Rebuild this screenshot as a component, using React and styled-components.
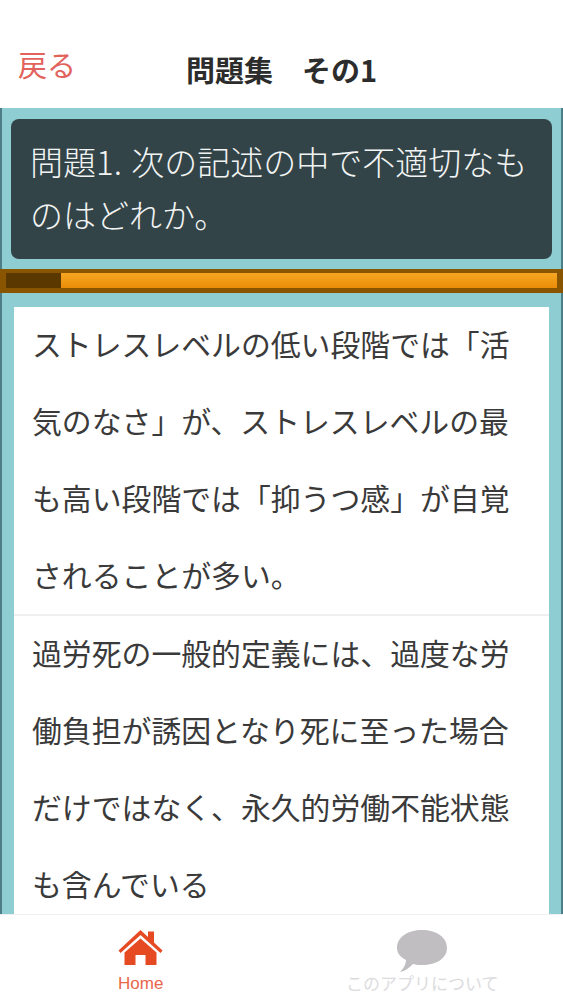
import React from "react";
import styled, { createGlobalStyle } from "styled-components";

const GlobalStyle = createGlobalStyle`
  html, body {
    margin: 0;
    padding: 0;
    background: #fff;
    font-family: "Noto Sans CJK JP", "Liberation Sans", sans-serif;
  }
`;

const Page = styled.div`
  width: 563px;
  height: 1000px;
  display: flex;
  flex-direction: column;
  overflow: hidden;
`;

const Header = styled.header`
  flex: 0 0 108px;
  box-sizing: border-box;
  display: grid;
  grid-template-columns: 1fr auto 1fr;
  align-items: end;
  padding-bottom: 19px;
  background: #fff;
`;

const BackLink = styled.a`
  padding-left: 18px;
  font-size: 29px;
  line-height: 40px;
  margin-bottom: 5px;
  color: #e2625c;
`;

const Title = styled.h1`
  margin: 0;
  font-size: 29px;
  line-height: 40px;
  font-weight: 700;
  color: #2c2c2c;
`;

const Main = styled.main`
  flex: 1;
  min-height: 0;
  overflow: hidden;
  background: #8ecdd2;
`;

const QuestionArea = styled.section`
  box-sizing: border-box;
  height: 161px;
  padding: 11px 9px 10px;
  border: solid #4d7d86;
  border-width: 0 2px;
`;

const QuestionCard = styled.div`
  box-sizing: border-box;
  height: 140px;
  padding: 16px 18px 16px 19px;
  border-radius: 8px;
  background: #334448;
  color: #f2f4f4;
  font-size: 33px;
  font-weight: 300;
  line-height: 53px;
  word-spacing: 2px;
`;

const ProgressTrack = styled.div`
  box-sizing: border-box;
  height: 24px;
  padding: 4px 6px 5px;
  background: #8a5500;
`;

const ProgressBar = styled.div`
  display: flex;
  height: 100%;
  background: linear-gradient(#f6a623, #ea8d08);
`;

const ProgressDone = styled.div`
  background: #5a3800;
`;

const ChoiceList = styled.section`
  box-sizing: border-box;
  padding: 14px 12px 0;
  border: solid #4d7d86;
  border-width: 0 2px;
`;

const Choice = styled.div`
  box-sizing: border-box;
  display: flow-root;
  height: 309px;
  padding: 0 19px 0 18px;
  background: #fff;
  border-bottom: 2px solid #efeff1;
`;

const ChoiceText = styled.p`
  margin: -2px 0 0;
  color: #3a3a3a;
  font-size: 29.85px;
  line-height: 77px;
`;

const TabBar = styled.nav`
  flex: 0 0 86px;
  box-sizing: border-box;
  display: grid;
  grid-template-columns: 1fr 1fr;
  background: #fff;
  border-top: 1px solid #f0f0f2;
`;

const Tab = styled.a`
  display: flex;
  flex-direction: column;
  align-items: center;
  padding-top: 15px;
  color: ${(p) => (p.$active ? "#e9654a" : "#dcdcde")};
`;

const IconSlot = styled.div`
  height: ${(p) => (p.$active ? "42px" : "41px")};
  display: flex;
  align-items: flex-start;
  color: ${(p) => (p.$active ? "#e64a22" : "#c0bec1")};
`;

const TabLabel = styled.span`
  font-family: ${(p) =>
    p.$active ? '"Liberation Sans", sans-serif' : '"Noto Sans CJK JP", sans-serif'};
  font-size: 17px;
  line-height: 24px;
`;

function HomeIcon() {
  return (
    <svg width="45" height="35" viewBox="0 0 45 35" fill="currentColor">
      <path d="M0.5 20.5 L22.5 0 L30 7 L30 1.5 L36 1.5 L36 12.5 L44.5 20.5 L42.5 23 L22.5 5 L2.5 23 Z" />
      <path d="M22.5 8.5 L38.5 22.5 L38.5 35 L27.5 35 L27.5 25 L17.5 25 L17.5 35 L6.5 35 L6.5 22.5 Z" />
    </svg>
  );
}

function BubbleIcon() {
  return (
    <svg width="50" height="42" viewBox="0 0 50 42" fill="currentColor">
      <path d="M25 0 C39 0 50 7 50 18 C50 29 38 35 26 35 C22 35 19 35 16 34 C12 38 8 41 3 42 C7 38 9 34 9 30 C3 27 0 23 0 18 C0 7 11 0 25 0 Z" />
    </svg>
  );
}

export default function App() {
  return (
    <Page>
      <GlobalStyle />
      <Header>
        <BackLink>戻る</BackLink>
        <Title>問題集　その1</Title>
      </Header>
      <Main>
        <QuestionArea>
          <QuestionCard>問題1. 次の記述の中で不適切なものはどれか。</QuestionCard>
        </QuestionArea>
        <ProgressTrack>
          <ProgressBar>
            <ProgressDone style={{ width: "10%" }} />
          </ProgressBar>
        </ProgressTrack>
        <ChoiceList>
          <Choice>
            <ChoiceText>
              ストレスレベルの低い段階では「活気のなさ」が、ストレスレベルの最も高い段階では「抑うつ感」が自覚されることが多い。
            </ChoiceText>
          </Choice>
          <Choice>
            <ChoiceText>
              過労死の一般的定義には、過度な労働負担が誘因となり死に至った場合だけではなく、永久的労働不能状態も含んでいる
            </ChoiceText>
          </Choice>
        </ChoiceList>
      </Main>
      <TabBar>
        <Tab $active>
          <IconSlot $active>
            <HomeIcon />
          </IconSlot>
          <TabLabel $active>Home</TabLabel>
        </Tab>
        <Tab>
          <IconSlot>
            <BubbleIcon />
          </IconSlot>
          <TabLabel>このアプリについて</TabLabel>
        </Tab>
      </TabBar>
    </Page>
  );
}
